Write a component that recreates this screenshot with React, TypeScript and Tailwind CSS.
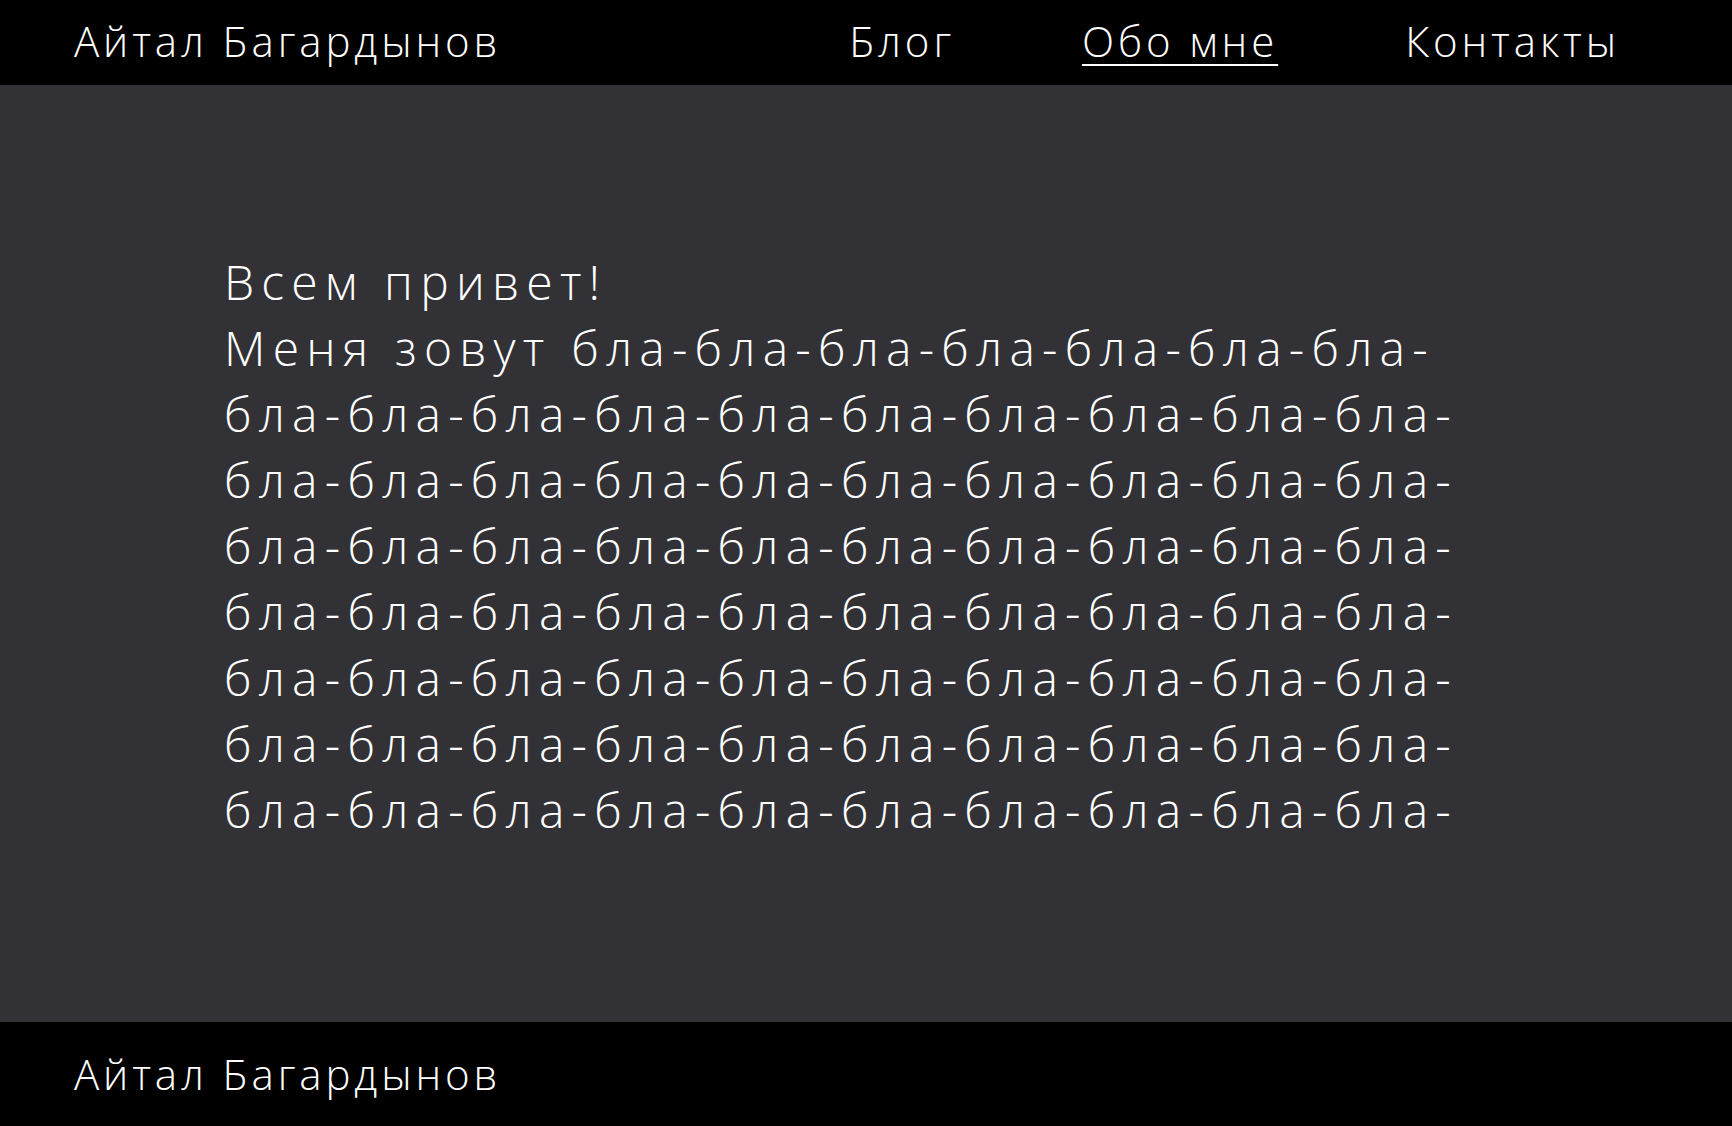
import React from "react";

const font = { fontFamily: '"Open Sans", "Noto Sans", sans-serif' };

export default function App() {
  const bla10 = "бла-".repeat(10);
  const lines = Array.from({ length: 7 }, () => bla10);
  return (
    <div className="flex h-screen flex-col bg-[#323136] text-white font-light" style={font}>
      <header className="flex h-[85px] shrink-0 items-center bg-black pb-[4px] pl-[74px] pr-[112px]">
        <div className="text-[42px] leading-none tracking-[3.9px]">Айтал Багардынов</div>
        <nav className="ml-auto flex items-center gap-[127px] text-[42px] leading-none tracking-[3.9px]">
          <a className="cursor-pointer">Блог</a>
          <a className="cursor-pointer underline decoration-2 underline-offset-[7px]">Обо мне</a>
          <a className="cursor-pointer">Контакты</a>
        </nav>
      </header>
      <main className="flex-1 pl-[224px] pt-[164px]">
        <div className="text-[48px] leading-[66px] tracking-[7.2px]">
          <div>Всем привет!</div>
          <div>Меня зовут {"бла-".repeat(7)}</div>
          {lines.map((l, i) => (
            <div key={i}>{l}</div>
          ))}
        </div>
      </main>
      <footer className="flex h-[104px] shrink-0 items-center bg-black pl-[74px]">
        <div className="text-[42px] leading-none tracking-[3.9px]">Айтал Багардынов</div>
      </footer>
    </div>
  );
}
